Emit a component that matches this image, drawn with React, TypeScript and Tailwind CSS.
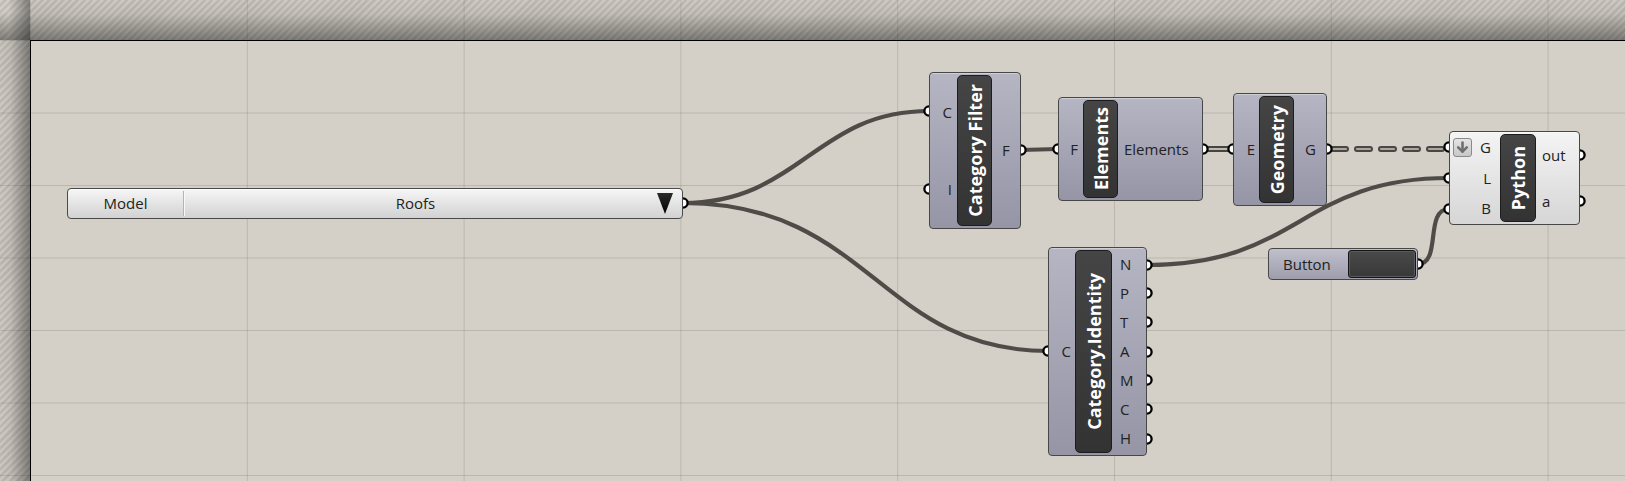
import React from 'react';

// Grasshopper-style canvas: hatched margin, gridded canvas, wired nodes

interface NodeSpec {
    label: string;
    box: string; // absolute position + size classes
    labelBox: string; // label column width
    inCol: string;
    outCol: string;
    inputs: string[];
    outputs: string[];
    light?: boolean;
    inputIcon?: boolean;
}

function ArrowIcon() {
    return (
        <div className="w-[19px] h-[19px] rounded-[3px] border border-[#8a8a8a] bg-gradient-to-b from-[#e4e4e4] to-[#c8c8c8] flex items-center justify-center">
            <svg width="13" height="13" viewBox="0 0 13 13">
                <path d="M6.5 1.5 V10.5" stroke="#6f6f6f" strokeWidth="2.6" strokeLinecap="round" fill="none" />
                <path d="M2.2 6.4 L6.5 10.7 L10.8 6.4" stroke="#6f6f6f" strokeWidth="2.6" strokeLinecap="round" strokeLinejoin="round" fill="none" />
            </svg>
        </div>
    );
}

function Node({ spec }: { spec: NodeSpec }) {
    return (
        <div
            className={`absolute ${spec.box} flex rounded-[4px] border border-[#474747] ${
                spec.light
                    ? 'bg-gradient-to-b from-[#f4f4f4] to-[#d6d6d6]'
                    : 'bg-gradient-to-b from-[#b5b5c3] to-[#9595a6]'
            } shadow-[inset_0_1px_0_rgba(255,255,255,0.35)]`}
        >
            <div className={`flex flex-col ${spec.inCol}`}>
                {spec.inputs.map((p, i) => (
                    <div key={i} className="flex-1 flex items-center">
                        {spec.inputIcon && (i === 0 ? <ArrowIcon /> : <div className="w-[19px]" />)}
                        <span className="flex-1 text-right">{p}</span>
                    </div>
                ))}
            </div>
            <div
                className={`${spec.labelBox} my-[2px] rounded-[5px] border border-[#1d1d1d] bg-gradient-to-b from-[#454545] to-[#333333] flex items-center justify-center overflow-hidden`}
            >
                <span className="[writing-mode:vertical-rl] rotate-180 whitespace-nowrap text-white font-bold text-[18px] leading-none">
                    {spec.label}
                </span>
            </div>
            <div className={`flex flex-col ${spec.outCol}`}>
                {spec.outputs.map((p, i) => (
                    <div key={i} className="flex-1 flex items-center">
                        <span>{p}</span>
                    </div>
                ))}
            </div>
        </div>
    );
}

const nodes: NodeSpec[] = [
    {
        label: 'Category Filter',
        box: 'left-[929px] top-[72px] w-[92px] h-[157px]',
        labelBox: 'w-[35px]',
        inCol: 'w-[27px] pr-[5px]',
        outCol: 'flex-1 pl-[10px]',
        inputs: ['C', 'I'],
        outputs: ['F'],
    },
    {
        label: 'Elements',
        box: 'left-[1058px] top-[97px] w-[145px] h-[104px]',
        labelBox: 'w-[35px]',
        inCol: 'w-[24px] pr-[5px]',
        outCol: 'flex-1 pl-[6px]',
        inputs: ['F'],
        outputs: ['Elements'],
    },
    {
        label: 'Geometry',
        box: 'left-[1233px] top-[93px] w-[94px] h-[113px]',
        labelBox: 'w-[35px]',
        inCol: 'w-[25px] pr-[4px]',
        outCol: 'flex-1 pl-[11px]',
        inputs: ['E'],
        outputs: ['G'],
    },
    {
        label: 'Category.Identity',
        box: 'left-[1048px] top-[247px] w-[99px] h-[209px]',
        labelBox: 'w-[37px]',
        inCol: 'w-[26px] pr-[4px]',
        outCol: 'flex-1 pl-[8px] py-[2px]',
        inputs: ['C'],
        outputs: ['N', 'P', 'T', 'A', 'M', 'C', 'H'],
    },
    {
        label: 'Python',
        box: 'left-[1449px] top-[131px] w-[131px] h-[94px]',
        labelBox: 'w-[36px]',
        inCol: 'w-[50px] pl-[3px] pr-[9px]',
        outCol: 'flex-1 pl-[6px]',
        inputs: ['G', 'L', 'B'],
        outputs: ['out', 'a'],
        light: true,
        inputIcon: true,
    },
];

const circles: [number, number][] = [
    [683, 203],
    [929, 111],
    [929, 189],
    [1021, 150],
    [1058, 149],
    [1203, 149],
    [1233, 149],
    [1327, 149],
    [1048, 351],
    [1147, 265],
    [1147, 293],
    [1147, 322],
    [1147, 352],
    [1147, 380],
    [1147, 409],
    [1147, 439],
    [1449, 147],
    [1449, 178],
    [1449, 209],
    [1580, 155],
    [1580, 201],
    [1418, 264],
];

export default function App() {
    return (
        <div className="relative w-[1625px] h-[481px] overflow-hidden grid grid-cols-[30px_1fr] grid-rows-[40px_1fr] font-['Open_Sans',sans-serif] text-[15px] text-[#222]">
            {/* hatched margins */}
            <div className="[background-image:linear-gradient(to_bottom,rgba(0,0,0,0)_30%,rgba(0,0,0,0.38)),linear-gradient(to_right,rgba(0,0,0,0)_30%,rgba(0,0,0,0.38)),repeating-linear-gradient(135deg,#d3cfc8_0px,#d3cfc8_2.5px,#c2beb7_2.5px,#c2beb7_5px)]" />
            <div className="[background-image:linear-gradient(to_bottom,rgba(0,0,0,0.03),rgba(0,0,0,0.08)_35%,rgba(0,0,0,0.4)),linear-gradient(to_right,rgba(0,0,0,0.1)_1px,transparent_1px),repeating-linear-gradient(135deg,#d3cfc8_0px,#d3cfc8_2.5px,#c2beb7_2.5px,#c2beb7_5px)] [background-size:100%_100%,216.8px_100%,auto]" />
            <div className="[background-image:linear-gradient(to_right,rgba(0,0,0,0.03),rgba(0,0,0,0.08)_35%,rgba(0,0,0,0.4)),linear-gradient(to_bottom,rgba(0,0,0,0.1)_1px,transparent_1px),repeating-linear-gradient(135deg,#d3cfc8_0px,#d3cfc8_2.5px,#c2beb7_2.5px,#c2beb7_5px)] [background-size:100%_100%,100%_72.5px,auto]" />
            {/* canvas */}
            <div className="border-l border-t border-black bg-[#d4d0c8] [background-image:linear-gradient(to_right,rgba(0,0,0,0.12)_1px,transparent_1px),linear-gradient(to_bottom,rgba(0,0,0,0.12)_1px,transparent_1px)] [background-size:216.8px_72.5px] [background-position:215.8px_71.5px]" />

            {/* wires and ports */}
            <svg className="absolute left-0 top-0" width="1625" height="481" viewBox="0 0 1625 481">
                <g fill="none" stroke="#4f4c48" strokeWidth="4.2" strokeLinecap="round">
                    <path d="M683 203 C 800 203, 815 111, 929 111" />
                    <path d="M683 203 C 870 203, 880 351, 1048 351" />
                    <path d="M1021 150 L1058 149" />
                    <path d="M1147 265 C 1300 265, 1300 178, 1449 178" />
                    <path d="M1418 264 C 1442 264, 1424 209, 1449 209" />
                </g>
                <path d="M1203 149 L1233 149" stroke="#47443f" strokeWidth="6" />
                <path d="M1203 149 L1233 149" stroke="#bdb9b1" strokeWidth="2" />
                <path d="M1333 149 L1446 149" stroke="#4a4743" strokeWidth="6" strokeDasharray="13 11" strokeLinecap="round" fill="none" />
                <path d="M1333 149 L1446 149" stroke="#aaa69f" strokeWidth="2.2" strokeDasharray="13 11" strokeLinecap="round" fill="none" />
                {circles.map(([cx, cy], i) => (
                    <circle key={i} cx={cx} cy={cy} r="4.6" fill="#fff" stroke="#000" strokeWidth="2.3" />
                ))}
            </svg>

            {/* value list */}
            <div className="absolute left-[67px] top-[188px] w-[616px] h-[31px] flex items-stretch rounded-[4px] border border-[#4a4a4a] bg-gradient-to-b from-[#f6f6f6] to-[#d2d2d2] shadow-[inset_0_1px_0_rgba(255,255,255,0.8)]">
                <div className="w-[115px] flex items-center justify-center">Model</div>
                <div className="w-[2px] my-[2px] border-l border-[#b4b4b4] bg-[#f8f8f8]" />
                <div className="flex-1 flex items-center justify-center">Roofs</div>
                <div className="w-[36px] flex items-center justify-center pl-[2px]">
                    <svg width="16" height="21" viewBox="0 0 16 21">
                        <defs>
                            <linearGradient id="tri" x1="0" y1="0" x2="0" y2="1">
                                <stop offset="0" stopColor="#2a2a2a" />
                                <stop offset="1" stopColor="#000" />
                            </linearGradient>
                        </defs>
                        <polygon points="0,0 16,0 8,21" fill="url(#tri)" />
                    </svg>
                </div>
            </div>

            {/* components */}
            {nodes.map((n) => (
                <Node key={n.label} spec={n} />
            ))}

            {/* button */}
            <div className="absolute left-[1268px] top-[248px] w-[150px] h-[32px] flex items-stretch rounded-[4px] border border-[#474747] bg-gradient-to-b from-[#c0c0cc] to-[#9d9dad] p-[1px]">
                <div className="w-[78px] flex items-center pl-[13px]">Button</div>
                <div className="flex-1 rounded-[3px] border border-[#151515] bg-gradient-to-b from-[#4a4a4a] to-[#383838] shadow-[inset_0_0_0_1px_#5a5a5a]" />
            </div>
        </div>
    );
}
